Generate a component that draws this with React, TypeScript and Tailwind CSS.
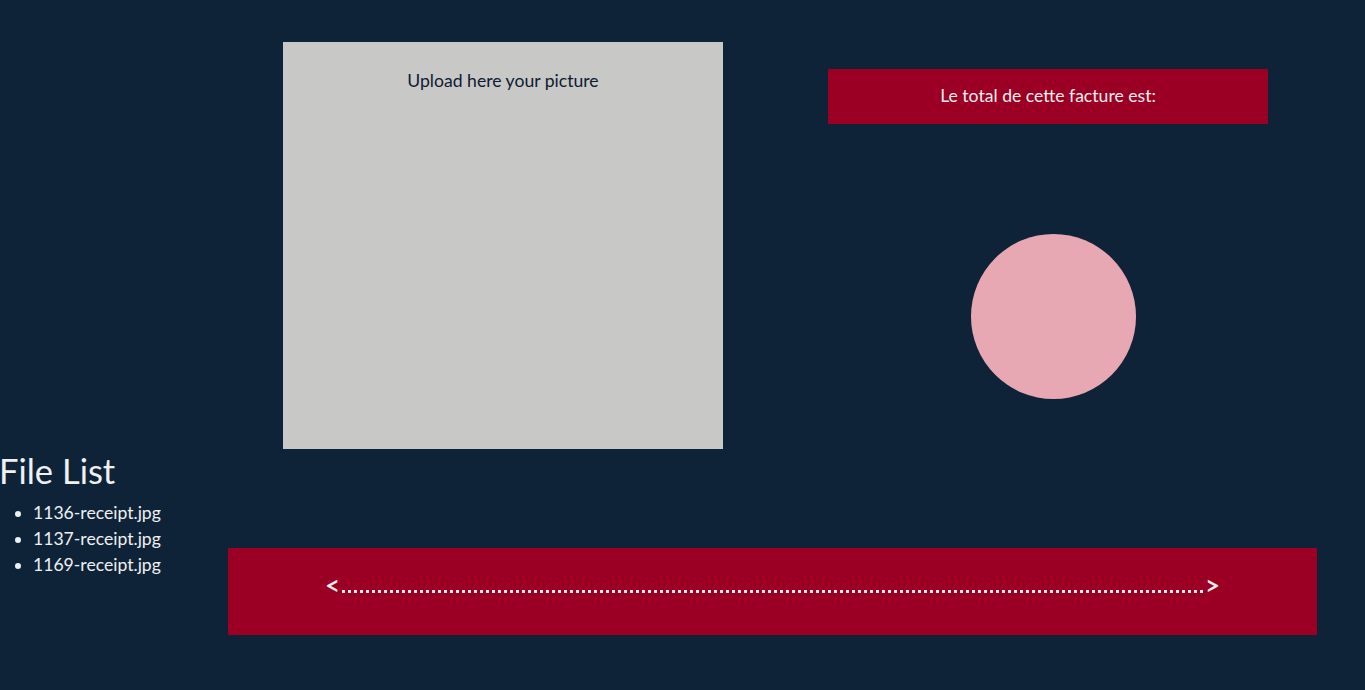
import React from 'react';

const files = ['1136-receipt.jpg', '1137-receipt.jpg', '1169-receipt.jpg'];

const App = () => {
  return (
    <div className="min-h-[690px] w-full bg-[#0f2338] font-['Lato',sans-serif] text-[17.6px] overflow-hidden">
      {/* top: upload area + total */}
      <div className="flex items-start">
        <div className="ml-[283px] mt-[42px] w-[440px] h-[407px] bg-[#c8c8c6] pt-[26px] text-center text-[#0f1a33]">
          Upload here your picture
        </div>
        <div className="ml-[105px] w-[440px] flex flex-col">
          <div className="mt-[69px] h-[55px] bg-[#9b0024] flex items-center justify-center text-[#f2eeee]">
            Le total de cette facture est:
          </div>
          <div className="mt-[110px] ml-[143px] w-[165px] h-[165px] rounded-full bg-[#e8a8b3]" />
        </div>
      </div>

      {/* bottom: file list + navigation bar */}
      <div className="flex items-start">
        <div className="w-[228px] shrink-0 text-[#eef0f2]">
          <h2 className="text-[34.5px] leading-[43px] -ml-[1px]">File List</h2>
          <ul className="mt-[8px] list-disc pl-[33px] leading-[26px]">
            {files.map((f) => (
              <li key={f}>{f}</li>
            ))}
          </ul>
        </div>
        <div className="mt-[99px] w-[1089px] h-[87px] bg-[#9b0024] flex items-center justify-center text-[#f2eeee] text-[26px] font-semibold">
          <span className="mb-[14px] leading-none">&lt;</span>
          <div className="mx-[2px] w-[861px] border-b-[3px] border-dotted border-[#f2eeee]" />
          <span className="mb-[14px] leading-none">&gt;</span>
        </div>
      </div>
    </div>
  );
};

export default App;
